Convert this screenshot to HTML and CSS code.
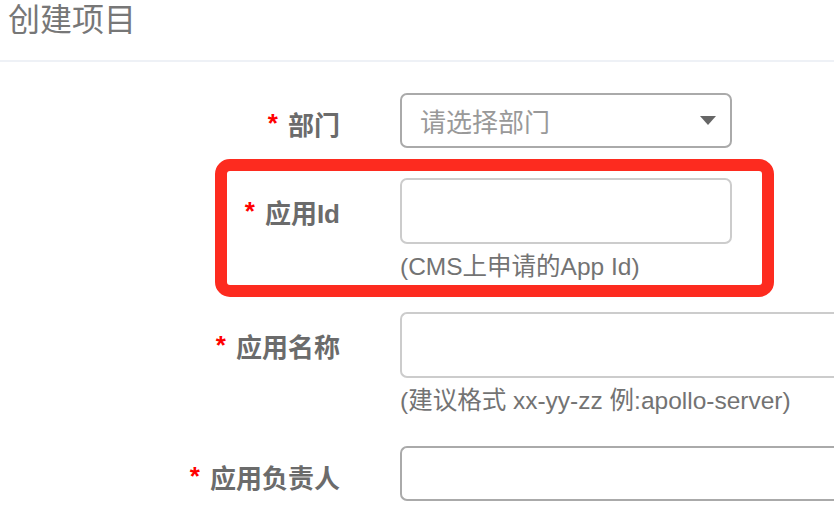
FILE: index.html
```html
<!DOCTYPE html>
<html lang="zh-CN">
<head>
    <meta charset="UTF-8">
    <meta name="viewport" content="width=device-width, initial-scale=1.0">
    <title>创建项目</title>
    <link rel="stylesheet" href="styles.css">
</head>
<body>
    <div class="page-header">
        <h1>创建项目</h1>
    </div>

    <form class="form">
        <div class="form-group short">
            <label class="control-label"><span class="required">*</span>部门</label>
            <div class="field">
                <div class="select">
                    <span class="placeholder">请选择部门</span>
                    <span class="caret"></span>
                </div>
            </div>
        </div>

        <div class="form-group tall">
            <div class="callout"></div>
            <label class="control-label" for="appId"><span class="required">*</span>应用Id</label>
            <div class="field">
                <input type="text" id="appId" class="input">
                <div class="help">(CMS上申请的App Id)</div>
            </div>
        </div>

        <div class="form-group tall">
            <label class="control-label" for="appName"><span class="required">*</span>应用名称</label>
            <div class="field wide">
                <input type="text" id="appName" class="input">
                <div class="help">(建议格式 xx-yy-zz 例:apollo-server)</div>
            </div>
        </div>

        <div class="form-group short">
            <label class="control-label" for="owner"><span class="required">*</span>应用负责人</label>
            <div class="field wide">
                <input type="text" id="owner" class="input dark">
            </div>
        </div>
    </form>
</body>
</html>
```

FILE: styles.css
```css
body {
    margin: 0;
    overflow: hidden;
    background: #fff;
    font-family: "Liberation Sans", "Noto Sans CJK SC", sans-serif;
}
.page-header {
    height: 60px;
    border-bottom: 2px solid #eef1f6;
    padding-left: 8px;
}
.page-header h1 {
    margin: 0;
    font-size: 32px;
    line-height: 40px;
    font-weight: normal;
    color: #777;
}
.form {
    padding-top: 31px;
}
.form-group {
    position: relative;
    display: grid;
    grid-template-columns: 340px 1fr;
    column-gap: 60px;
    margin-bottom: 30px;
}
.control-label {
    display: flex;
    align-items: center;
    justify-content: flex-end;
    font-size: 26px;
    font-weight: bold;
    color: #6b6b6b;
    white-space: nowrap;
}
.required {
    color: #f00;
    margin-right: 10px;
}
.short .control-label {
    height: 55px;
    padding-top: 5px;
    box-sizing: border-box;
}
.tall .control-label {
    height: 66px;
}
.field {
    width: 332px;
}
.field.wide {
    width: auto;
}
.select {
    height: 55px;
    box-sizing: border-box;
    border: 2px solid #aaa;
    border-radius: 7px;
    display: flex;
    align-items: center;
    justify-content: space-between;
    padding: 0 14px 0 18px;
}
.placeholder {
    font-size: 26px;
    color: #999;
}
.caret {
    width: 0;
    height: 0;
    border-left: 8px solid transparent;
    border-right: 8px solid transparent;
    border-top: 9px solid #666;
}
.input {
    display: block;
    width: 100%;
    height: 66px;
    box-sizing: border-box;
    border: 2px solid #ccc;
    border-radius: 7px;
    margin: 0;
    font-size: 24px;
}
.wide .input {
    border-right: none;
    border-radius: 7px 0 0 7px;
}
.short .input {
    height: 55px;
}
.input.dark {
    border-color: #aaa;
}
.help {
    margin-top: 8px;
    font-size: 24.5px;
    line-height: 30px;
    color: #737373;
    white-space: nowrap;
}
.callout {
    position: absolute;
    left: 215px;
    top: -19px;
    width: 559px;
    height: 138px;
    box-sizing: border-box;
    border: 12px solid #fd2b1f;
    border-radius: 15px;
    pointer-events: none;
}
```
